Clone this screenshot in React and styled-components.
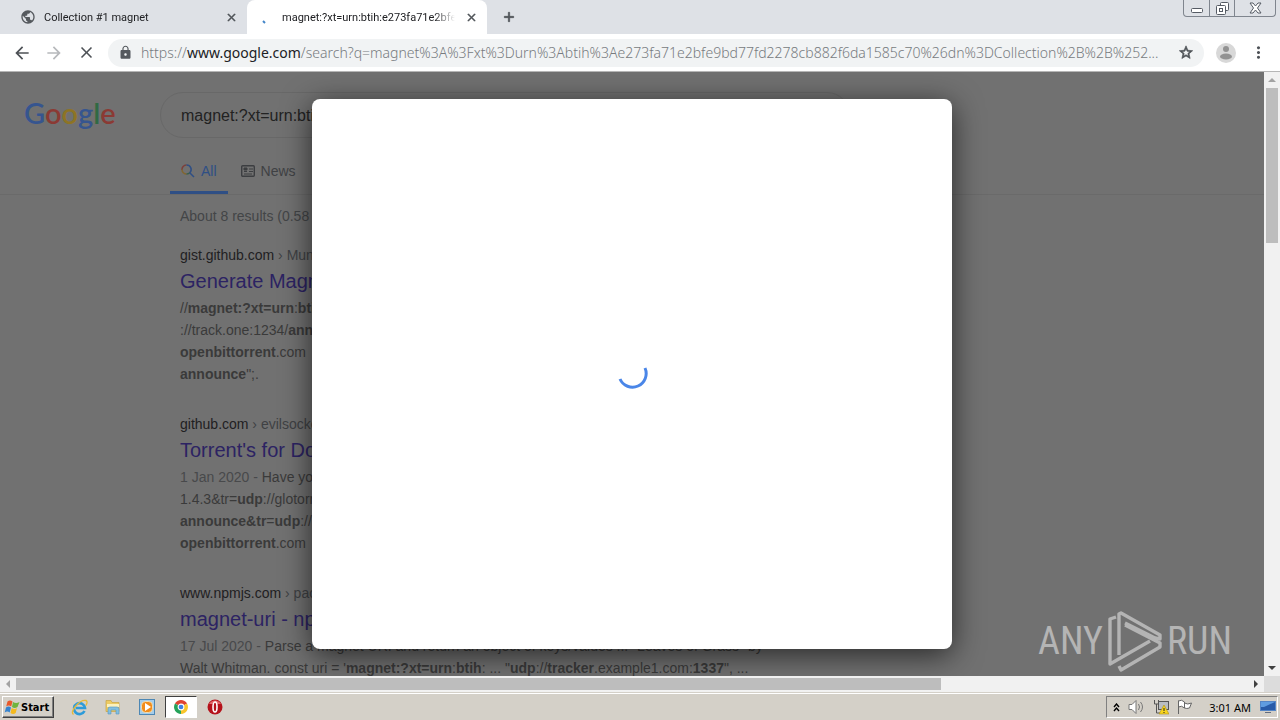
import styled, { createGlobalStyle } from "styled-components";
import {
  MdArrowBack,
  MdArrowForward,
  MdClose,
  MdLock,
  MdStarBorder,
  MdMoreVert,
  MdAdd,
  MdPublic,
} from "react-icons/md";

const ui = '"Noto Sans", "Open Sans", sans-serif';
const arial = '"Liberation Sans", Arial, sans-serif';
const tahoma = '"DejaVu Sans Condensed", "DejaVu Sans", sans-serif';

const GlobalStyle = createGlobalStyle`
  * {
    box-sizing: border-box;
  }
  body {
    margin: 0;
    font-family: ${ui};
    color: #202124;
  }
  button {
    border: 0;
    padding: 0;
    background: none;
    color: inherit;
    font: inherit;
  }
  a {
    color: inherit;
    text-decoration: none;
  }
`;

const Desktop = styled.div`
  display: flex;
  flex-direction: column;
  height: 100vh;
  overflow: hidden;
`;

const TabStrip = styled.div`
  display: flex;
  flex: none;
  height: 34px;
  background: #dee1e6;
`;

const Tab = styled.div`
  display: flex;
  align-items: center;
  gap: 8px;
  width: ${(props) => (props.$active ? 240 : 247)}px;
  padding: 0 8px 0 ${(props) => (props.$active ? 8 : 20)}px;
  border-radius: 8px 8px 0 0;
  background: ${(props) => (props.$active ? "#fff" : "transparent")};
  font-family: Roboto, ${arial};
  font-size: 11px;
`;

const TabTitle = styled.span`
  flex: 1;
  overflow: hidden;
  white-space: nowrap;
  mask-image: linear-gradient(to right, #000 88%, transparent);
`;

const IconButton = styled.button`
  display: flex;
  flex: none;
  align-items: center;
  justify-content: center;
  width: ${(props) => props.$size || 16}px;
  height: ${(props) => props.$size || 16}px;
  color: ${(props) => props.$color || "#4d5156"};

  path:not([fill="none"]) {
    stroke: currentColor;
    stroke-width: ${(props) => (props.$bold ? 1 : 0)};
  }
`;

const NewTab = styled(IconButton)`
  margin: 9px 14px;
`;

const WindowButtons = styled.div`
  display: flex;
  height: 17px;
  margin: 0 4px 0 auto;
  border: 1px solid #7f858e;
  border-top: 0;
  border-radius: 0 0 4px 4px;
`;

const WindowButton = styled.button`
  display: flex;
  align-items: center;
  justify-content: center;
  width: ${(props) => (props.$wide ? 41 : 25)}px;

  & + & {
    border-left: 1px solid #7f858e;
  }
`;

const Toolbar = styled.div`
  display: flex;
  flex: none;
  align-items: center;
  height: 38px;
  padding: 0 12px;
  gap: 12px;
  background: #fff;
  border-bottom: 1px solid #b6b6b6;
`;

const AddressBar = styled.label`
  display: flex;
  flex: 1;
  align-items: center;
  gap: 8px;
  min-width: 0;
  height: 28px;
  padding: 0 10px;
  border-radius: 14px;
  background: #f1f3f4;
`;

const Url = styled.span`
  flex: 1;
  overflow: hidden;
  color: #777b80;
  font-size: 14px;
  font-weight: 300;
  line-height: 18px;
  text-overflow: ellipsis;
  white-space: nowrap;

  b {
    color: #202124;
    font-weight: 400;
  }
`;

const Viewport = styled.div`
  display: grid;
  flex: 1;
  min-height: 0;
  grid-template-columns: minmax(0, 1fr) 16px;
  grid-template-rows: minmax(0, 1fr) 16px;
  background: #f1f1f1;
`;

const Page = styled.main`
  position: relative;
  overflow: hidden;
  background: #717171;
  color: #3a3a3a;
  font-family: ${arial};
`;

const SearchHeader = styled.header`
  display: grid;
  grid-template-columns: 136px 1fr;
  padding: 20px 24px 0;
  border-bottom: 1px solid #6a6a6a;
`;

const Logo = styled.a`
  font-family: Lato, sans-serif;
  font-size: 29px;
  font-weight: 600;
  line-height: 42px;
`;

const Letter = styled.span`
  color: ${(props) => props.$color};
`;

const SearchBox = styled.input`
  width: 690px;
  height: 46px;
  padding: 2px 20px 0;
  border: 1px solid #686868;
  border-radius: 23px;
  background: transparent;
  color: #222;
  font-family: ${arial};
  font-size: 16px;
`;

const SearchTabs = styled.nav`
  display: flex;
  grid-column: 2;
  gap: 2px;
  margin: 10px 0 0 10px;
`;

const SearchTab = styled.a`
  display: flex;
  align-items: center;
  gap: 6px;
  height: 46px;
  padding: 2px 11px 0;
  border-bottom: 3px solid ${(props) => (props.$active ? "#2f4f85" : "transparent")};
  color: ${(props) => (props.$active ? "#2f4f85" : "#3f4144")};
  font-size: 14px;
`;

const Results = styled.section`
  width: 790px;
  padding: 10px 0 0 180px;
  font-size: 14px;
  line-height: 22px;
`;

const Stats = styled.p`
  margin: 0;
  color: #434547;
  white-space: nowrap;
`;

const Result = styled.article`
  margin: 17px 0 28px;
  white-space: nowrap;

  & + & {
    margin-top: 0;
  }
`;

const Cite = styled.div`
  color: #3f4144;

  b {
    color: #1f2022;
    font-weight: 400;
  }
`;

const ResultTitle = styled.h3`
  margin: 0;
  color: #2c2363;
  font-size: 20px;
  font-weight: 400;
  line-height: 30px;
`;

const Snippet = styled.p`
  margin: 1px 0 0;
`;

const Muted = styled.span`
  color: #48494b;
`;

const Dialog = styled.div`
  position: absolute;
  top: 27px;
  left: 50%;
  display: flex;
  align-items: center;
  justify-content: center;
  width: 640px;
  height: 550px;
  transform: translateX(-50%);
  border-radius: 8px;
  background: #fff;
  box-shadow: 0 6px 30px rgba(0, 0, 0, 0.65);
`;

const Watermark = styled.div`
  position: absolute;
  right: 32px;
  bottom: 3px;
  display: flex;
  align-items: center;
  gap: 4px;
  color: #b4b4b4;
  font-family: "Roboto Condensed", "Open Sans Condensed", sans-serif;
  font-size: 38px;
  font-weight: 400;
  line-height: 64px;
`;

const ScrollBar = styled.div`
  display: flex;
  flex-direction: ${(props) => (props.$vertical ? "column" : "row")};
  align-items: center;
  background: #f1f1f1;
`;

const Thumb = styled.div`
  background: #bdbdbd;
  width: ${(props) => (props.$vertical ? "12px" : "auto")};
  height: ${(props) => (props.$vertical ? "auto" : "12px")};
  flex: ${(props) => (props.$vertical ? "155 0 0" : "925 0 0")};
`;

const Spacer = styled.div`
  flex: ${(props) => props.$size} 0 0;
`;

const ScrollArrow = styled.button`
  display: flex;
  flex: none;
  align-items: center;
  justify-content: center;
  width: 16px;
  height: 16px;
  color: ${(props) => (props.$dim ? "#a3a3a3" : "#404040")};
`;

const Corner = styled.div`
  background: #dcdcdc;
`;

const Taskbar = styled.footer`
  display: flex;
  flex: none;
  align-items: center;
  height: 28px;
  padding: 1px 2px 0;
  background: #d4d0c8;
  border-top: 1px solid #d4d0c8;
  box-shadow: inset 0 1px #fff;
`;

const StartButton = styled.button`
  display: flex;
  align-items: center;
  gap: 1px;
  width: 52px;
  height: 22px;
  padding-left: 1px;
  border: 1px solid;
  border-color: #fff #404040 #404040 #fff;
  box-shadow: inset -1px -1px #808080;
  color: #000;
  font-family: ${tahoma};
  font-size: 11px;
  font-weight: 700;
`;

const Launchers = styled.div`
  display: flex;
  align-items: center;
  margin-left: 9px;
  gap: 2px;
`;

const Launcher = styled.button`
  display: flex;
  align-items: center;
  justify-content: center;
  width: 32px;
  height: 22px;
  border: 1px solid transparent;
  border-color: ${(props) => (props.$active ? "#404040 #fff #fff #404040" : "transparent")};
  background: ${(props) => (props.$active ? "#fff" : "none")};
`;

const Tray = styled.div`
  display: flex;
  align-items: center;
  gap: 8px;
  height: 22px;
  margin-left: auto;
  padding: 0 1px 0 6px;
  border: 1px solid;
  border-color: #808080 #fff #fff #808080;
  color: #000;
  font-size: 11px;
`;

const Clock = styled.time`
  margin: 0 1px 0 8px;
`;

const results = [
  {
    site: "gist.github.com",
    path: "Mun",
    title: "Generate Magnet",
    lines: [
      <>//<b>magnet:?xt=urn</b>:<b>btih</b></>,
      <>://track.one:1234/<b>announce</b></>,
      <><b>openbittorrent</b>.com</>,
      <><b>announce</b>";.</>,
    ],
  },
  {
    site: "github.com",
    path: "evilsocket",
    title: "Torrent's for Do",
    lines: [
      <><Muted>1 Jan 2020 - </Muted>Have you</>,
      <>1.4.3&amp;tr=<b>udp</b>://glotorr</>,
      <><b>announce&amp;tr</b>=<b>udp</b>://</>,
      <><b>openbittorrent</b>.com</>,
    ],
  },
  {
    site: "www.npmjs.com",
    path: "pack",
    title: "magnet-uri - npm",
    lines: [
      <><Muted>17 Jul 2020 - </Muted>Parse a magnet URI and return an object of keys/values ... "Leaves of Grass" by</>,
      <>Walt Whitman. const uri = '<b>magnet:?xt=urn</b>:<b>btih</b>: ... "<b>udp</b>://<b>tracker</b>.example1.com:<b>1337</b>", ...</>,
    ],
  },
];

const Arrow = ({ turn }) => (
  <svg width="8" height="8" viewBox="0 0 8 8">
    <path d="M4 2L8 6H0z" fill="currentColor" transform={`rotate(${turn} 4 4)`} />
  </svg>
);

const SearchIcon = () => (
  <svg width="14" height="14" viewBox="0 0 14 14" fill="none" strokeWidth="1.5">
    <path d="M1 6A4.5 4.5 0 0 1 5.5 1" stroke="#7d3f3a" />
    <path d="M5.5 1A4.5 4.5 0 0 1 9 8.5" stroke="#2f4f85" />
    <path d="M1 5.5A4.5 4.5 0 0 0 5.5 10" stroke="#806530" />
    <path d="M5.5 10A4.5 4.5 0 0 0 9 8.5" stroke="#38604a" />
    <path d="M8.5 8.5L13 13" stroke="#2f4f85" />
  </svg>
);

const NewsIcon = () => (
  <svg width="14" height="14" viewBox="0 0 14 14" fill="none" stroke="#3c3e41">
    <rect x="0.7" y="1.7" width="12.6" height="10.6" rx="1" strokeWidth="1.4" />
    <path d="M8 5h4M8 7.5h4M3 10h8M3 7.5h3" />
    <path d="M3 4h3v2H3z" fill="#3c3e41" />
  </svg>
);

const WindowsIcon = () => (
  <svg width="16" height="16" viewBox="0 0 16 16">
    <path d="M3.5 2.5q2.5-2 5 0L7.2 7.5q-2.5-2-5 0z" fill="#e8592b" />
    <path d="M9 3q3 2 6.5 0l-2 5q-3 2-5.5 0z" fill="#6fb43c" />
    <path d="M2 8.5q2.5-2 5 0l-1.3 5q-2.5-2-5 0z" fill="#3583cf" />
    <path d="M7.7 9q3 2 5.3 0l-1.3 5q-2.5 2-5.2 0z" fill="#f4b91e" />
  </svg>
);

const ExplorerIcon = () => (
  <svg width="17" height="17" viewBox="0 0 17 17" fill="none">
    <path d="M13.5 12A5.5 5.5 0 1 1 14 9H5" stroke="#2d9bd9" strokeWidth="2.6" />
    <path d="M2.5 15.5C-2 13 9 0 15 1.5c2 1 1 3 0 5" stroke="#e5b93a" strokeWidth="1.4" />
  </svg>
);

const FolderIcon = () => (
  <svg width="16" height="16" viewBox="0 0 16 16">
    <path d="M1 1.5h5l1 2h7v9H1z" fill="#edcb63" stroke="#c7a343" strokeWidth="0.7" />
    <path d="M2 5h12v3H2z" fill="#fbf1be" />
    <path d="M3 15v-5q0-2 2-2h7q2 0 2 2v5h-3v-4H6v4z" fill="#82bfe0" stroke="#5593bf" strokeWidth="0.6" />
  </svg>
);

const MediaIcon = () => (
  <svg width="16" height="16" viewBox="0 0 16 16">
    <rect x="0.5" y="0.5" width="15" height="15" fill="#a5cdea" stroke="#4d87b4" />
    <rect x="2.5" y="2.5" width="11" height="11" rx="4" fill="#f18d1c" stroke="#fff0c8" strokeWidth="0.7" />
    <path d="M6 4L12 8 6 12z" fill="#fff" />
  </svg>
);

const ChromeIcon = () => (
  <svg width="14" height="14" viewBox="0 0 16 16">
    <path d="M8 8L1.1 4A8 8 0 0 1 14.9 4z" fill="#df4332" />
    <path d="M8 8L14.9 4A8 8 0 0 1 8 16z" fill="#f9c52b" />
    <path d="M8 8L8 16A8 8 0 0 1 1.1 4z" fill="#25a35a" />
    <circle cx="8" cy="8" r="3.3" fill="#3e80e4" stroke="#fff" strokeWidth="1.2" />
  </svg>
);

const OperaIcon = () => (
  <svg width="16" height="16" viewBox="0 0 16 16">
    <circle cx="8" cy="8" r="7.5" fill="#b5121b" />
    <path d="M2 5a7 7 0 0 1 12 0z" fill="#e4676a" />
    <ellipse cx="8" cy="8" rx="2" ry="5" fill="#b5121b" stroke="#fff" strokeWidth="1.6" />
  </svg>
);

const AnyRunMark = () => (
  <svg width="56" height="64" viewBox="0 0 56 64" fill="none" stroke="#b4b4b4" strokeWidth="3.4" strokeLinejoin="round">
    <path d="M9 8L3 10V55L43 32" />
    <path d="M12 46V5L14 4L53 26V30L48 29L18 14" />
    <path d="M12 57L14 61L53 38V34L18 16" />
  </svg>
);

const App = () => {
  return (
    <Desktop>
      <GlobalStyle />
      <TabStrip>
        <Tab>
          <MdPublic size={16} color="#55595e" />
          <TabTitle>Collection #1 magnet</TabTitle>
          <IconButton $bold aria-label="Close tab"><MdClose size={13} /></IconButton>
        </Tab>
        <Tab $active>
          <svg width="19" height="16" viewBox="0 0 19 16">
            <path d="M8 12l2 2" stroke="#4285c8" strokeWidth="2" />
          </svg>
          <TabTitle>magnet:?xt=urn:btih:e273fa71e2bfe</TabTitle>
          <IconButton $bold aria-label="Close tab"><MdClose size={13} /></IconButton>
        </Tab>
        <NewTab $bold aria-label="New tab"><MdAdd size={18} /></NewTab>
        <WindowButtons>
          <WindowButton aria-label="Minimize">
            <svg width="12" height="12" viewBox="0 0 12 12" fill="#fff" stroke="#555b64">
              <rect x="0.5" y="6.5" width="11" height="4" rx="1" />
            </svg>
          </WindowButton>
          <WindowButton aria-label="Restore">
            <svg width="13" height="13" viewBox="0 0 13 13" fill="#fff" stroke="#555b64">
              <rect x="4.5" y="0.5" width="8" height="8" rx="1" />
              <rect x="0.5" y="3.5" width="9" height="9" rx="1" />
              <rect x="3.5" y="6.5" width="3" height="3" />
            </svg>
          </WindowButton>
          <WindowButton $wide aria-label="Close">
            <svg width="13" height="12" viewBox="0 0 13 12" fill="#fff" stroke="#555b64">
              <path d="M1 1h3l2.5 3L9 1h3L8.5 6l3.5 5H9L6.5 8 4 11H1l3.5-5z" />
            </svg>
          </WindowButton>
        </WindowButtons>
      </TabStrip>
      <Toolbar>
        <IconButton $size={20} aria-label="Back"><MdArrowBack size={20} /></IconButton>
        <IconButton $size={20} $color="#b7b9bc" aria-label="Forward"><MdArrowForward size={20} /></IconButton>
        <IconButton $size={20} aria-label="Stop"><MdClose size={19} /></IconButton>
        <AddressBar>
          <MdLock size={15} color="#55595e" />
          <Url>
            https://<b>www.google.com</b>/search?q=magnet%3A%3Fxt%3Durn%3Abtih%3Ae273fa71e2bfe9bd77fd2278cb882f6da1585c70%26dn%3DCollection%2B%2B%252...
          </Url>
          <IconButton $bold aria-label="Bookmark"><MdStarBorder size={17} /></IconButton>
        </AddressBar>
        <IconButton $size={20} aria-label="Profile">
          <svg width="20" height="20" viewBox="0 0 20 20">
            <circle cx="10" cy="10" r="10" fill="#d8d8d8" />
            <circle cx="10" cy="6" r="3" fill="#929292" />
            <ellipse cx="10" cy="13.5" rx="6" ry="3" fill="#929292" />
          </svg>
        </IconButton>
        <IconButton $size={20} aria-label="Menu"><MdMoreVert size={19} /></IconButton>
      </Toolbar>
      <Viewport>
        <Page>
          <SearchHeader>
            <Logo href="#" aria-label="Google">
              <Letter $color="#36558f">G</Letter>
              <Letter $color="#8b3a34">o</Letter>
              <Letter $color="#8e7424">o</Letter>
              <Letter $color="#36558f">g</Letter>
              <Letter $color="#306a44">l</Letter>
              <Letter $color="#8b3a34">e</Letter>
            </Logo>
            <SearchBox aria-label="Search" defaultValue="magnet:?xt=urn:btih:e273fa71e2bfe9bd" />
            <SearchTabs>
              <SearchTab href="#" $active><SearchIcon />All</SearchTab>
              <SearchTab href="#"><NewsIcon />News</SearchTab>
            </SearchTabs>
          </SearchHeader>
          <Results>
            <Stats>About 8 results (0.58 s</Stats>
            {results.map((result) => (
              <Result key={result.site}>
                <Cite><b>{result.site}</b> › {result.path}</Cite>
                <ResultTitle><a href="#">{result.title}</a></ResultTitle>
                <Snippet>
                  {result.lines.map((line, i) => (
                    <span key={i}>{line}<br /></span>
                  ))}
                </Snippet>
              </Result>
            ))}
          </Results>
          <Dialog role="dialog" aria-label="Loading">
            <svg width="32" height="32" viewBox="0 0 32 32" fill="none">
              <path d="M4 21A13.5 13.5 0 0 0 29 10" stroke="#4a86e8" strokeWidth="3" />
            </svg>
          </Dialog>
          <Watermark>
            <span>ANY</span>
            <AnyRunMark />
            <span>RUN</span>
          </Watermark>
        </Page>
        <ScrollBar $vertical>
          <ScrollArrow $dim aria-label="Scroll up"><Arrow turn={0} /></ScrollArrow>
          <Thumb $vertical />
          <Spacer $size={417} />
          <ScrollArrow aria-label="Scroll down"><Arrow turn={180} /></ScrollArrow>
        </ScrollBar>
        <ScrollBar>
          <ScrollArrow $dim aria-label="Scroll left"><Arrow turn={-90} /></ScrollArrow>
          <Thumb />
          <Spacer $size={307} />
          <ScrollArrow aria-label="Scroll right"><Arrow turn={90} /></ScrollArrow>
        </ScrollBar>
        <Corner />
      </Viewport>
      <Taskbar>
        <StartButton><WindowsIcon />Start</StartButton>
        <Launchers>
          <Launcher aria-label="Internet Explorer"><ExplorerIcon /></Launcher>
          <Launcher aria-label="Windows Explorer"><FolderIcon /></Launcher>
          <Launcher aria-label="Media Player"><MediaIcon /></Launcher>
          <Launcher $active aria-label="Chrome"><ChromeIcon /></Launcher>
          <Launcher aria-label="Opera"><OperaIcon /></Launcher>
        </Launchers>
        <Tray>
          <svg width="7" height="9" viewBox="0 0 7 9" fill="none" stroke="#000" strokeWidth="1.4">
            <path d="M1 4l2.5-3L6 4M1 8l2.5-3L6 8" />
          </svg>
          <svg width="17" height="16" viewBox="0 0 17 16" fill="none" stroke="#777">
            <path d="M1 5.5h3l4-4v13l-4-4H1z" fill="#fff" />
            <path d="M10.5 5q2 3 0 6M12.5 3q4 5 0 10" />
          </svg>
          <svg width="16" height="16" viewBox="0 0 16 16" fill="none">
            <rect x="5.5" y="2.5" width="10" height="8" fill="#b9bdc2" stroke="#555" />
            <path d="M1.5 1v4h4V1M3.5 5v9h5" stroke="#555" />
            <path d="M11 6l5 9H6z" fill="#f8d51c" stroke="#ac8e15" strokeWidth="0.6" />
            <path d="M11 9v3M11 13v1" stroke="#222" />
          </svg>
          <svg width="16" height="16" viewBox="0 0 16 16" fill="#fff" stroke="#666">
            <path d="M1.5 1.5V15M1.5 2q3-2 6 1v6q-3-3-6-1M7.5 4q3 2 7 0l-2 5q-3 1-5 0" />
          </svg>
          <Clock>3:01 AM</Clock>
          <svg width="16" height="14" viewBox="0 0 16 14">
            <rect x="0.5" y="1.5" width="15" height="9" fill="#285ba8" stroke="#5585c5" />
            <path d="M1 2h14L4 7H1z" fill="#5f9ce0" />
            <path d="M5 12.5h6" stroke="#606c80" />
          </svg>
        </Tray>
      </Taskbar>
    </Desktop>
  );
};

export default App;
